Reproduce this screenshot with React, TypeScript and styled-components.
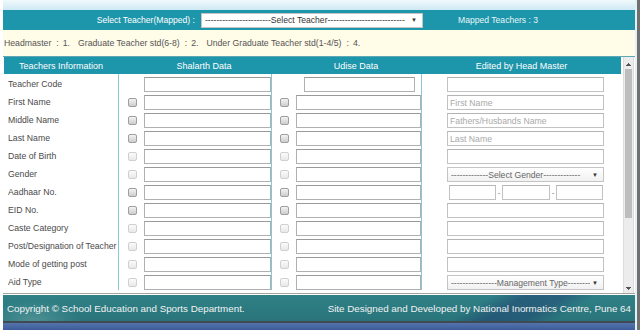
import React from "react";
import styled, { createGlobalStyle } from "styled-components";

type Check = "on" | "off" | "none";
type EditKind = "input" | "gender" | "aadhaar" | "management";

interface Field {
  label: string;
  check: Check;
  edit: EditKind;
  placeholder?: string;
}

const fields: Field[] = [
  { label: "Teacher Code", check: "none", edit: "input" },
  { label: "First Name", check: "on", edit: "input", placeholder: "First Name" },
  { label: "Middle Name", check: "on", edit: "input", placeholder: "Fathers/Husbands Name" },
  { label: "Last Name", check: "on", edit: "input", placeholder: "Last Name" },
  { label: "Date of Birth", check: "off", edit: "input" },
  { label: "Gender", check: "off", edit: "gender" },
  { label: "Aadhaar No.", check: "on", edit: "aadhaar" },
  { label: "EID No.", check: "on", edit: "input" },
  { label: "Caste Category", check: "off", edit: "input" },
  { label: "Post/Designation of Teacher", check: "off", edit: "input" },
  { label: "Mode of getting post", check: "off", edit: "input" },
  { label: "Aid Type", check: "off", edit: "management" },
];

const dashes = (n: number) => "-".repeat(n);

const App = () => {
  return (
    <>
      <GlobalStyle />
      <Page>
        <Main>
          <TopBand />
          <SelectBar>
            <BarLabel>Select Teacher(Mapped) :</BarLabel>
            <Dropdown
              $w={222}
              text={dashes(23) + "Select Teacher" + dashes(27)}
              tone="#333"
              bg="#fff"
            />
            <Mapped>Mapped Teachers : 3</Mapped>
          </SelectBar>
          <Summary>
            <Stat>
              Headmaster<Sep>:</Sep>1.
            </Stat>
            <Stat>
              Graduate Teacher std(6-8)<Sep>:</Sep>2.
            </Stat>
            <Stat>
              Under Graduate Teacher std(1-4/5)<Sep>:</Sep>4.
            </Stat>
          </Summary>
          <ScrollBody>
            <Table>
              <HeadRow>
                <span>Teachers Information</span>
                <span>Shalarth Data</span>
                <span>Udise Data</span>
                <span>Edited by Head Master</span>
              </HeadRow>
              {fields.map((f, i) => (
                <Row key={f.label}>
                  <Label>{f.label}</Label>
                  <DataCell $pad={9}>
                    <Tick $hidden={f.check === "none"} disabled={f.check === "off"} />
                    <TextBox $w={127} />
                  </DataCell>
                  {i === 0 ? (
                    <DataCell $pad={32}>
                      <TextBox $w={111} />
                    </DataCell>
                  ) : (
                    <DataCell $pad={8}>
                      <Tick disabled={f.check === "off"} />
                      <TextBox $w={125} />
                    </DataCell>
                  )}
                  <EditCell>{renderEdit(f)}</EditCell>
                </Row>
              ))}
            </Table>
            <ScrollTrack>
              <ScrollButton $dir="up" />
              <Thumb />
              <TrackRest />
              <ScrollButton $dir="down" />
            </ScrollTrack>
          </ScrollBody>
          <Footer>
            <span>Copyright © School Education and Sports Department.</span>
            <span>Site Designed and Developed by National Inormatics Centre, Pune 64</span>
          </Footer>
          <FooterRule />
          <BlueStrip />
        </Main>
        <EdgeGap />
        <EdgeBar />
      </Page>
    </>
  );
};

const renderEdit = (f: Field) => {
  if (f.edit === "gender") {
    return (
      <Dropdown
        $w={157}
        text={dashes(13) + "Select Gender" + dashes(13)}
        tone="#666"
        bg="linear-gradient(#ffffff, #f1f1f1)"
      />
    );
  }
  if (f.edit === "management") {
    return (
      <Dropdown
        $w={157}
        text={dashes(16) + "Management Type" + dashes(8)}
        tone="#666"
        bg="linear-gradient(#ffffff, #f1f1f1)"
      />
    );
  }
  if (f.edit === "aadhaar") {
    return (
      <Aadhaar>
        <TextBox $w={47} $light />
        <Dash>-</Dash>
        <TextBox $w={48} $light />
        <Dash>-</Dash>
        <TextBox $w={47} $light />
      </Aadhaar>
    );
  }
  return <TextBox $w={157} $light placeholder={f.placeholder} />;
};

interface DropdownProps {
  $w: number;
  text: string;
  tone: string;
  bg: string;
}

const Dropdown = ({ $w, text, tone, bg }: DropdownProps) => (
  <SelectBox $w={$w} $bg={bg} $tone={tone}>
    <select defaultValue="">
      <option value="">{text}</option>
    </select>
    <Arrow>▼</Arrow>
  </SelectBox>
);

export default App;

const GlobalStyle = createGlobalStyle`
  html, body {
    margin: 0;
    padding: 0;
    background: #fff;
  }
  body {
    font-family: "Liberation Sans", Arial, sans-serif;
  }
  * {
    box-sizing: border-box;
  }
`;

const Page = styled.div`
  display: flex;
  height: 330px;
  padding-left: 3px;
  overflow: hidden;
`;

const Main = styled.div`
  width: 632px;
  display: flex;
  flex-direction: column;
`;

const EdgeGap = styled.div`
  width: 2px;
  background: #e2f1f5;
`;

const EdgeBar = styled.div`
  width: 3px;
  background: #707070;
`;

const TopBand = styled.div`
  height: 10px;
  background: linear-gradient(#f1f9fc, #cde9f3);
`;

const SelectBar = styled.div`
  height: 20px;
  background: #1d95aa;
  display: flex;
  align-items: center;
  font-size: 8.6px;
  color: #fff;
`;

const BarLabel = styled.div`
  width: 195px;
  text-align: right;
  padding-right: 3px;
  margin-right: 3px;
`;

const Mapped = styled.div`
  margin-left: 35px;
  color: #e6f5f8;
`;

const SelectBox = styled.div<{ $w: number; $bg: string; $tone: string }>`
  width: ${(p) => p.$w}px;
  height: 15px;
  flex: none;
  display: flex;
  align-items: center;
  padding: 0 5px 0 3px;
  border: 1px solid #c4c4c4;
  background: ${(p) => p.$bg};

  select {
    flex: 1;
    min-width: 0;
    appearance: none;
    border: none;
    background: transparent;
    padding: 0;
    margin: 0;
    outline: none;
    font: 8.6px "Liberation Sans", Arial, sans-serif;
    color: ${(p) => p.$tone};
  }
`;

const Arrow = styled.span`
  font-size: 6px;
  color: #333;
  margin-left: 2px;
`;

const Summary = styled.div`
  height: 26px;
  background: #fffce8;
  display: flex;
  align-items: center;
  padding-left: 1px;
  font-size: 8.7px;
  color: #555;
  white-space: nowrap;
`;

const Stat = styled.span`
  margin-right: 8px;
`;

const Sep = styled.span`
  margin: 0 4px 0 5px;
`;

const ScrollBody = styled.div`
  height: 238px;
  flex: none;
  display: flex;
  border-top: 1px solid #5ea8b5;
  border-bottom: 1px solid #a3a3a3;
  margin-bottom: 1px;
  padding-left: 1px;
  overflow: hidden;
`;

const Table = styled.div`
  width: 618px;
  flex: none;
`;

const ScrollTrack = styled.div`
  width: 11px;
  margin-left: 1px;
  padding-top: 3px;
  display: flex;
  flex-direction: column;
  background: #ececec;
  border-left: 1px solid #dcdcdc;
  border-right: 1px solid #dcdcdc;
`;

const ScrollButton = styled.div<{ $dir: "up" | "down" }>`
  height: 9px;
  flex: none;
  background: ${(p) =>
    p.$dir === "up"
      ? "conic-gradient(from 140deg at 50% 0, #555 0 80deg, transparent 0) center / 5px 3px no-repeat"
      : "conic-gradient(from -40deg at 50% 100%, #555 0 80deg, transparent 0) center / 5px 3px no-repeat"};
`;

const Thumb = styled.div`
  height: 149px;
  flex: none;
  margin: 0 1px;
  background: #bdbdbd;
`;

const TrackRest = styled.div`
  flex: 1;
`;

const HeadRow = styled.div`
  height: 17px;
  margin-right: 1px;
  display: grid;
  grid-template-columns: 114px 172px 132px 1fr;
  align-items: center;
  background: #1d95aa;
  color: #fff;
  font-size: 9px;
  text-align: center;
`;

const Row = styled.div`
  height: 18px;
  display: grid;
  grid-template-columns: 114px 153px 150px 1fr;
`;

const Label = styled.div`
  padding: 3px 0 0 4px;
  line-height: 15px;
  font-size: 8.7px;
  color: #4a4a4a;
  white-space: nowrap;
`;

const DataCell = styled.div<{ $pad: number }>`
  display: flex;
  align-items: center;
  gap: 7px;
  padding: 3px 0 0 ${(p) => p.$pad}px;
  border-left: 1px solid #86c8d3;
`;

const EditCell = styled.div`
  display: flex;
  align-items: center;
  padding: 3px 0 0 25px;
  border-left: 1px solid #86c8d3;
`;

const Tick = styled.input.attrs({ type: "checkbox" })<{ $hidden?: boolean }>`
  appearance: none;
  margin: 0;
  flex: none;
  width: 9px;
  height: 9px;
  border-radius: 2px;
  border: 1px solid #9e9e9e;
  background: linear-gradient(#f3f3f3, #cdcdcd);
  visibility: ${(p) => (p.$hidden ? "hidden" : "visible")};

  &:disabled {
    border-color: #d0d0d0;
    background: linear-gradient(#fbfbfb, #e8e8e8);
  }
`;

const TextBox = styled.input<{ $w: number; $light?: boolean }>`
  width: ${(p) => p.$w}px;
  height: 15px;
  flex: none;
  margin: 0;
  padding: 0 2px;
  border: 1px solid ${(p) => (p.$light ? "#c2c2c2" : "#b0b0b0")};
  border-top-color: ${(p) => (p.$light ? "#b4b4b4" : "#9a9a9a")};
  background: #fff;
  outline: none;
  font: 8.7px "Liberation Sans", Arial, sans-serif;
  color: #333;

  &::placeholder {
    color: #a9a9a9;
  }
`;

const Aadhaar = styled.div`
  display: flex;
  align-items: center;
  margin-left: 2px;
`;

const Dash = styled.span`
  width: 6px;
  text-align: center;
  font-size: 8px;
  color: #777;
`;

const Footer = styled.div`
  height: 26px;
  flex: none;
  display: flex;
  align-items: center;
  justify-content: space-between;
  padding: 0 4px;
  font-size: 9.8px;
  color: #f2f2f2;
  white-space: nowrap;
  background: linear-gradient(
      150deg,
      transparent 0 245px,
      rgba(32, 62, 112, 0.5) 262px,
      rgba(32, 62, 112, 0.45) 282px,
      transparent 298px
    ),
    radial-gradient(ellipse 70px 30px at 30px 26px, rgba(160, 210, 210, 0.3), transparent 70%),
    linear-gradient(#2f8187, #29747a);
`;

const FooterRule = styled.div`
  height: 2px;
  flex: none;
  background: #3f4a52;
`;

const BlueStrip = styled.div`
  height: 7px;
  flex: none;
  background: linear-gradient(#5574ad, #3c5c99);
`;
